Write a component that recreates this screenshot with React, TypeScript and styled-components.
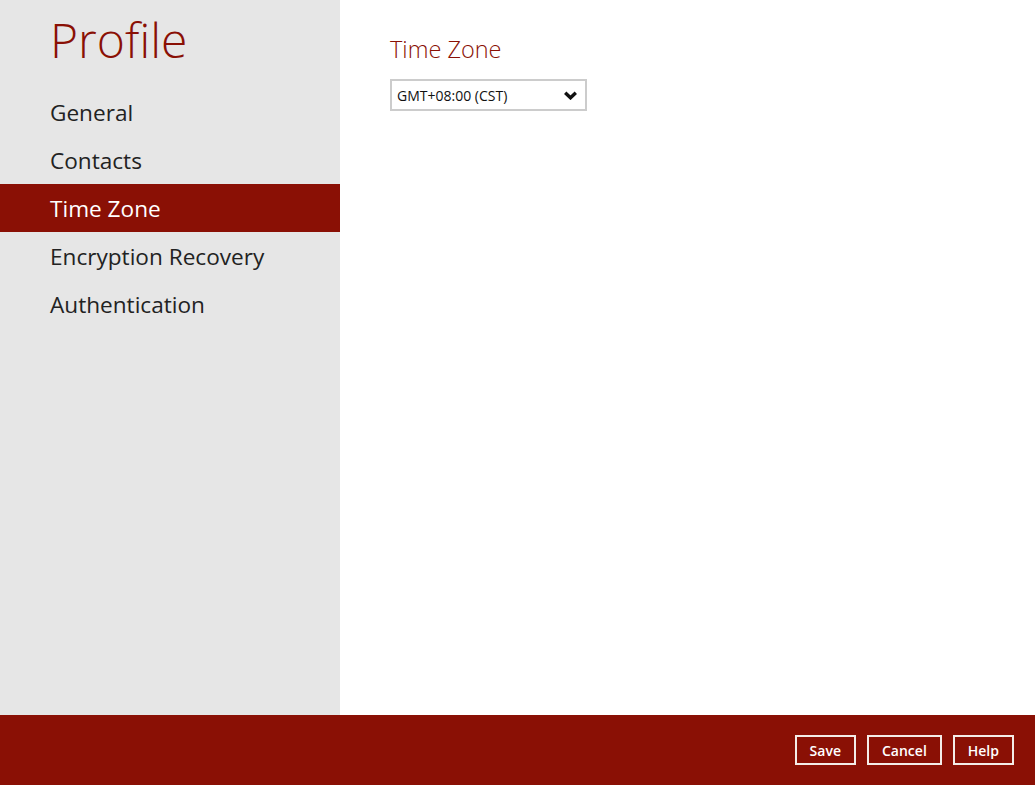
import * as React from 'react';
import styled, { createGlobalStyle } from 'styled-components';

const GlobalStyle = createGlobalStyle`
  html, body {
    margin: 0;
    padding: 0;
    height: 100%;
  }
  body {
    font-family: 'Open Sans', 'Noto Sans', sans-serif;
  }
  #root {
    height: 100%;
  }
`;

const brand = '#8a1005';

const Page = styled.div`
  width: 1035px;
  height: 785px;
  display: flex;
  flex-direction: column;
  overflow: hidden;
`;
const Body = styled.div`
  flex: 1;
  display: flex;
  min-height: 0;
`;
const Sidebar = styled.div`
  width: 340px;
  background: #e6e6e6;
  display: flex;
  flex-direction: column;
`;
const Title = styled.h1`
  margin: 0;
  padding: 7px 0 0 50px;
  height: 81px;
  font-size: 48px;
  font-weight: 300;
  color: ${brand};
  line-height: 66px;
`;
const Menu = styled.div`
  display: flex;
  flex-direction: column;
`;
const MenuItem = styled.div<{ $active?: boolean }>`
  height: 48px;
  line-height: 50px;
  padding-left: 50px;
  font-size: 22.6px;
  font-weight: 400;
  color: ${({ $active }) => ($active ? '#fff' : '#222')};
  background: ${({ $active }) => ($active ? brand : 'transparent')};
  cursor: pointer;
`;
const Content = styled.div`
  flex: 1;
  background: #fff;
  padding: 33px 50px;
`;
const Heading = styled.h2`
  margin: 0 0 14px;
  font-size: 23.5px;
  font-weight: 300;
  line-height: 32px;
  color: ${brand};
`;
const Select = styled.div`
  width: 188px;
  height: 28px;
  border: 2px solid #cccccc;
  display: flex;
  align-items: center;
  justify-content: space-between;
  padding: 0 0 0 5px;
  box-sizing: content-box;
  font-size: 14px;
  color: #111;
`;
const Chevron = styled.svg`
  width: 13px;
  height: 9px;
  margin-right: 8px;
`;
const Footer = styled.div`
  height: 70px;
  background: ${brand};
  display: flex;
  align-items: center;
  justify-content: flex-end;
  gap: 11px;
  padding: 0 21px;
`;
const FooterButton = styled.button`
  height: 30px;
  padding: 0 13px;
  background: transparent;
  border: 2px solid #f5ece8;
  color: #fff;
  font-family: 'Open Sans', 'Noto Sans', sans-serif;
  font-size: 14px;
  font-weight: 600;
  cursor: pointer;
`;

const items = ['General', 'Contacts', 'Time Zone', 'Encryption Recovery', 'Authentication'];

export default function App() {
  const [selected, setSelected] = React.useState('Time Zone');

  return (
    <Page>
      <GlobalStyle />
      <Body>
        <Sidebar>
          <Title>Profile</Title>
          <Menu>
            {items.map((item) => (
              <MenuItem key={item} $active={item === selected} onClick={() => setSelected(item)}>
                {item}
              </MenuItem>
            ))}
          </Menu>
        </Sidebar>
        <Content>
          <Heading>Time Zone</Heading>
          <Select>
            <span>GMT+08:00 (CST)</span>
            <Chevron viewBox="0 0 13 9">
              <path d="M1.2 1.8 L6.5 6.8 L11.8 1.8" fill="none" stroke="#111" strokeWidth="3.4" strokeLinejoin="miter" />
            </Chevron>
          </Select>
        </Content>
      </Body>
      <Footer>
        <FooterButton>Save</FooterButton>
        <FooterButton>Cancel</FooterButton>
        <FooterButton>Help</FooterButton>
      </Footer>
    </Page>
  );
}
